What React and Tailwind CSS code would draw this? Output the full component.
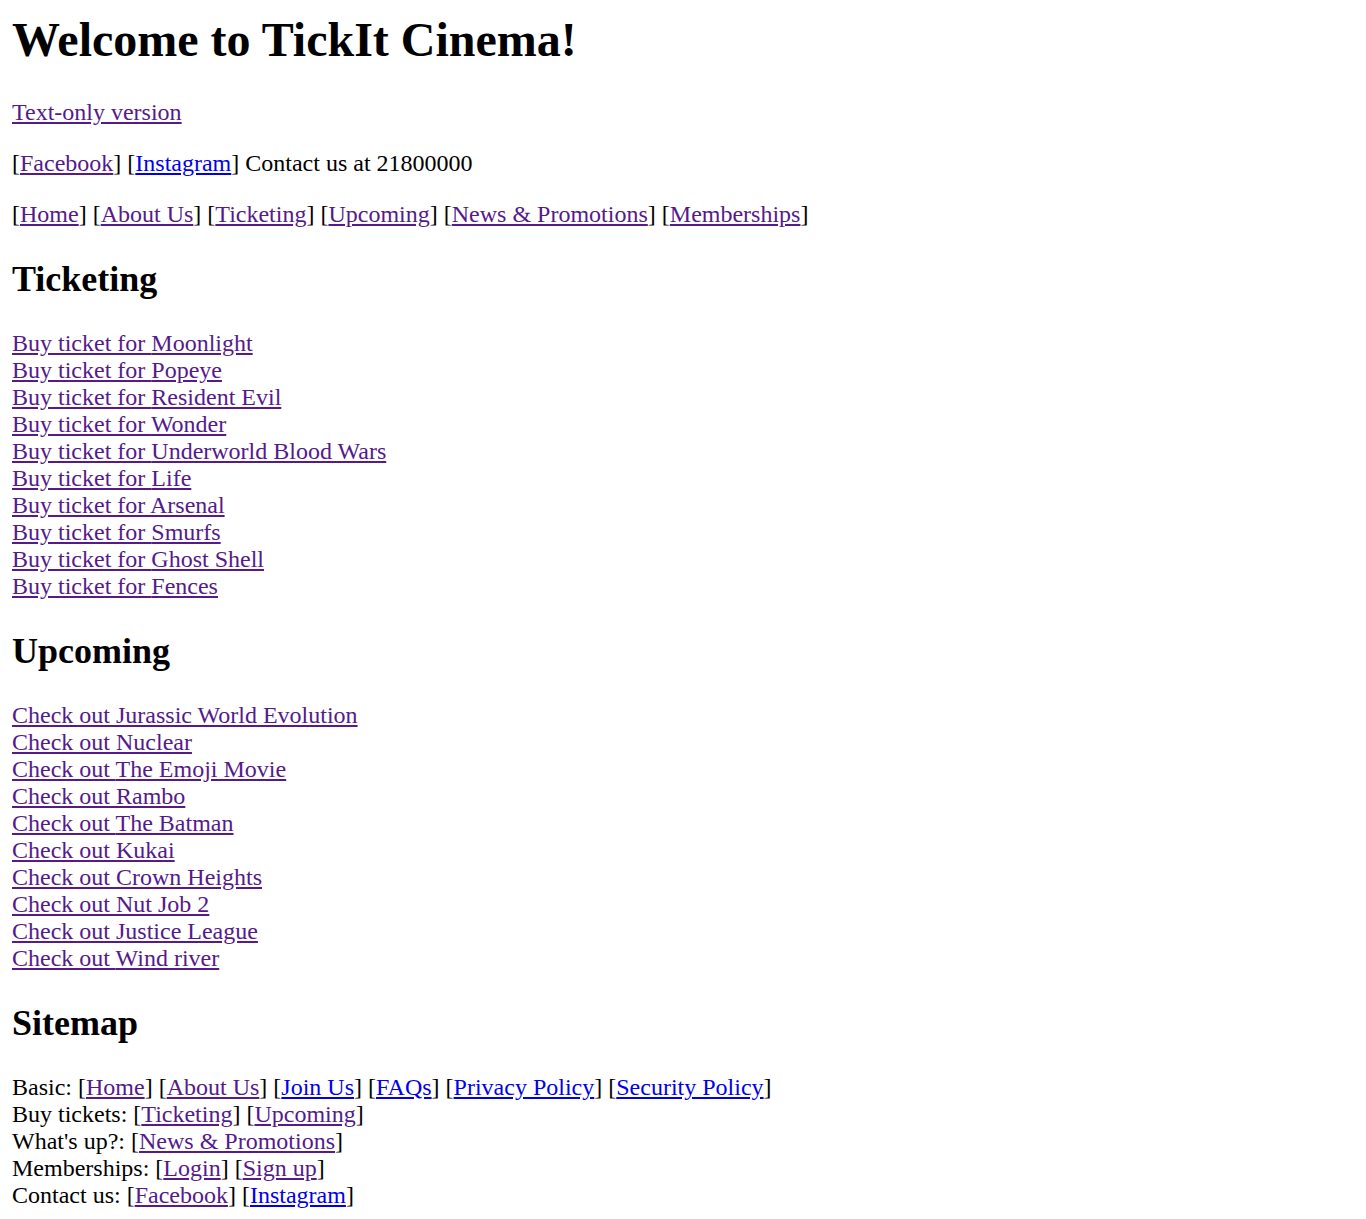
import React from 'react';

const tickets = [
  'Moonlight',
  'Popeye',
  'Resident Evil',
  'Wonder',
  'Underworld Blood Wars',
  'Life',
  'Arsenal',
  'Smurfs',
  'Ghost Shell',
  'Fences',
];

const upcoming = [
  'Jurassic World Evolution',
  'Nuclear',
  'The Emoji Movie',
  'Rambo',
  'The Batman',
  'Kukai',
  'Crown Heights',
  'Nut Job 2',
  'Justice League',
  'Wind river',
];

// visited links are purple, fresh ones blue
const A = ({ children, fresh }) => (
  <a href="#" className={fresh ? 'underline text-[#0000ee]' : 'underline text-[#551a8b]'}>
    {children}
  </a>
);

const Bracket = ({ children, fresh }) => (
  <>
    [<A fresh={fresh}>{children}</A>]
  </>
);

const App = () => {
  return (
    <div className="min-h-[1219px] bg-white p-[12px] font-['Liberation_Serif','Times_New_Roman',serif] text-[24px] leading-[27px] text-black">
      <h1 className="mb-[32px] text-[48px] font-bold leading-[55px]">Welcome to TickIt Cinema!</h1>

      <p className="my-[24px]">
        <A>Text-only version</A>
      </p>

      <p className="my-[24px]">
        <Bracket>Facebook</Bracket> <Bracket fresh>Instagram</Bracket> Contact us at 21800000
      </p>

      <p className="my-[24px]">
        <Bracket>Home</Bracket> <Bracket>About Us</Bracket> <Bracket>Ticketing</Bracket>{' '}
        <Bracket>Upcoming</Bracket> <Bracket>News &amp; Promotions</Bracket> <Bracket>Memberships</Bracket>
      </p>

      <h2 className="my-[30px] text-[36px] font-bold leading-[42px]">Ticketing</h2>
      <div className="my-[30px]">
        {tickets.map((t) => (
          <div key={t}>
            <A>Buy ticket for {t}</A>
          </div>
        ))}
      </div>

      <h2 className="my-[30px] text-[36px] font-bold leading-[42px]">Upcoming</h2>
      <div className="my-[30px]">
        {upcoming.map((t) => (
          <div key={t}>
            <A>Check out {t}</A>
          </div>
        ))}
      </div>

      <h2 className="my-[30px] text-[36px] font-bold leading-[42px]">Sitemap</h2>
      <div>
        <div>
          Basic: <Bracket>Home</Bracket> <Bracket>About Us</Bracket> <Bracket fresh>Join Us</Bracket>{' '}
          <Bracket fresh>FAQs</Bracket> <Bracket fresh>Privacy Policy</Bracket>{' '}
          <Bracket fresh>Security Policy</Bracket>
        </div>
        <div>
          Buy tickets: <Bracket>Ticketing</Bracket> <Bracket>Upcoming</Bracket>
        </div>
        <div>
          What's up?: <Bracket>News &amp; Promotions</Bracket>
        </div>
        <div>
          Memberships: <Bracket>Login</Bracket> <Bracket>Sign up</Bracket>
        </div>
        <div>
          Contact us: <Bracket>Facebook</Bracket> <Bracket fresh>Instagram</Bracket>
        </div>
      </div>
    </div>
  );
};

export default App;
